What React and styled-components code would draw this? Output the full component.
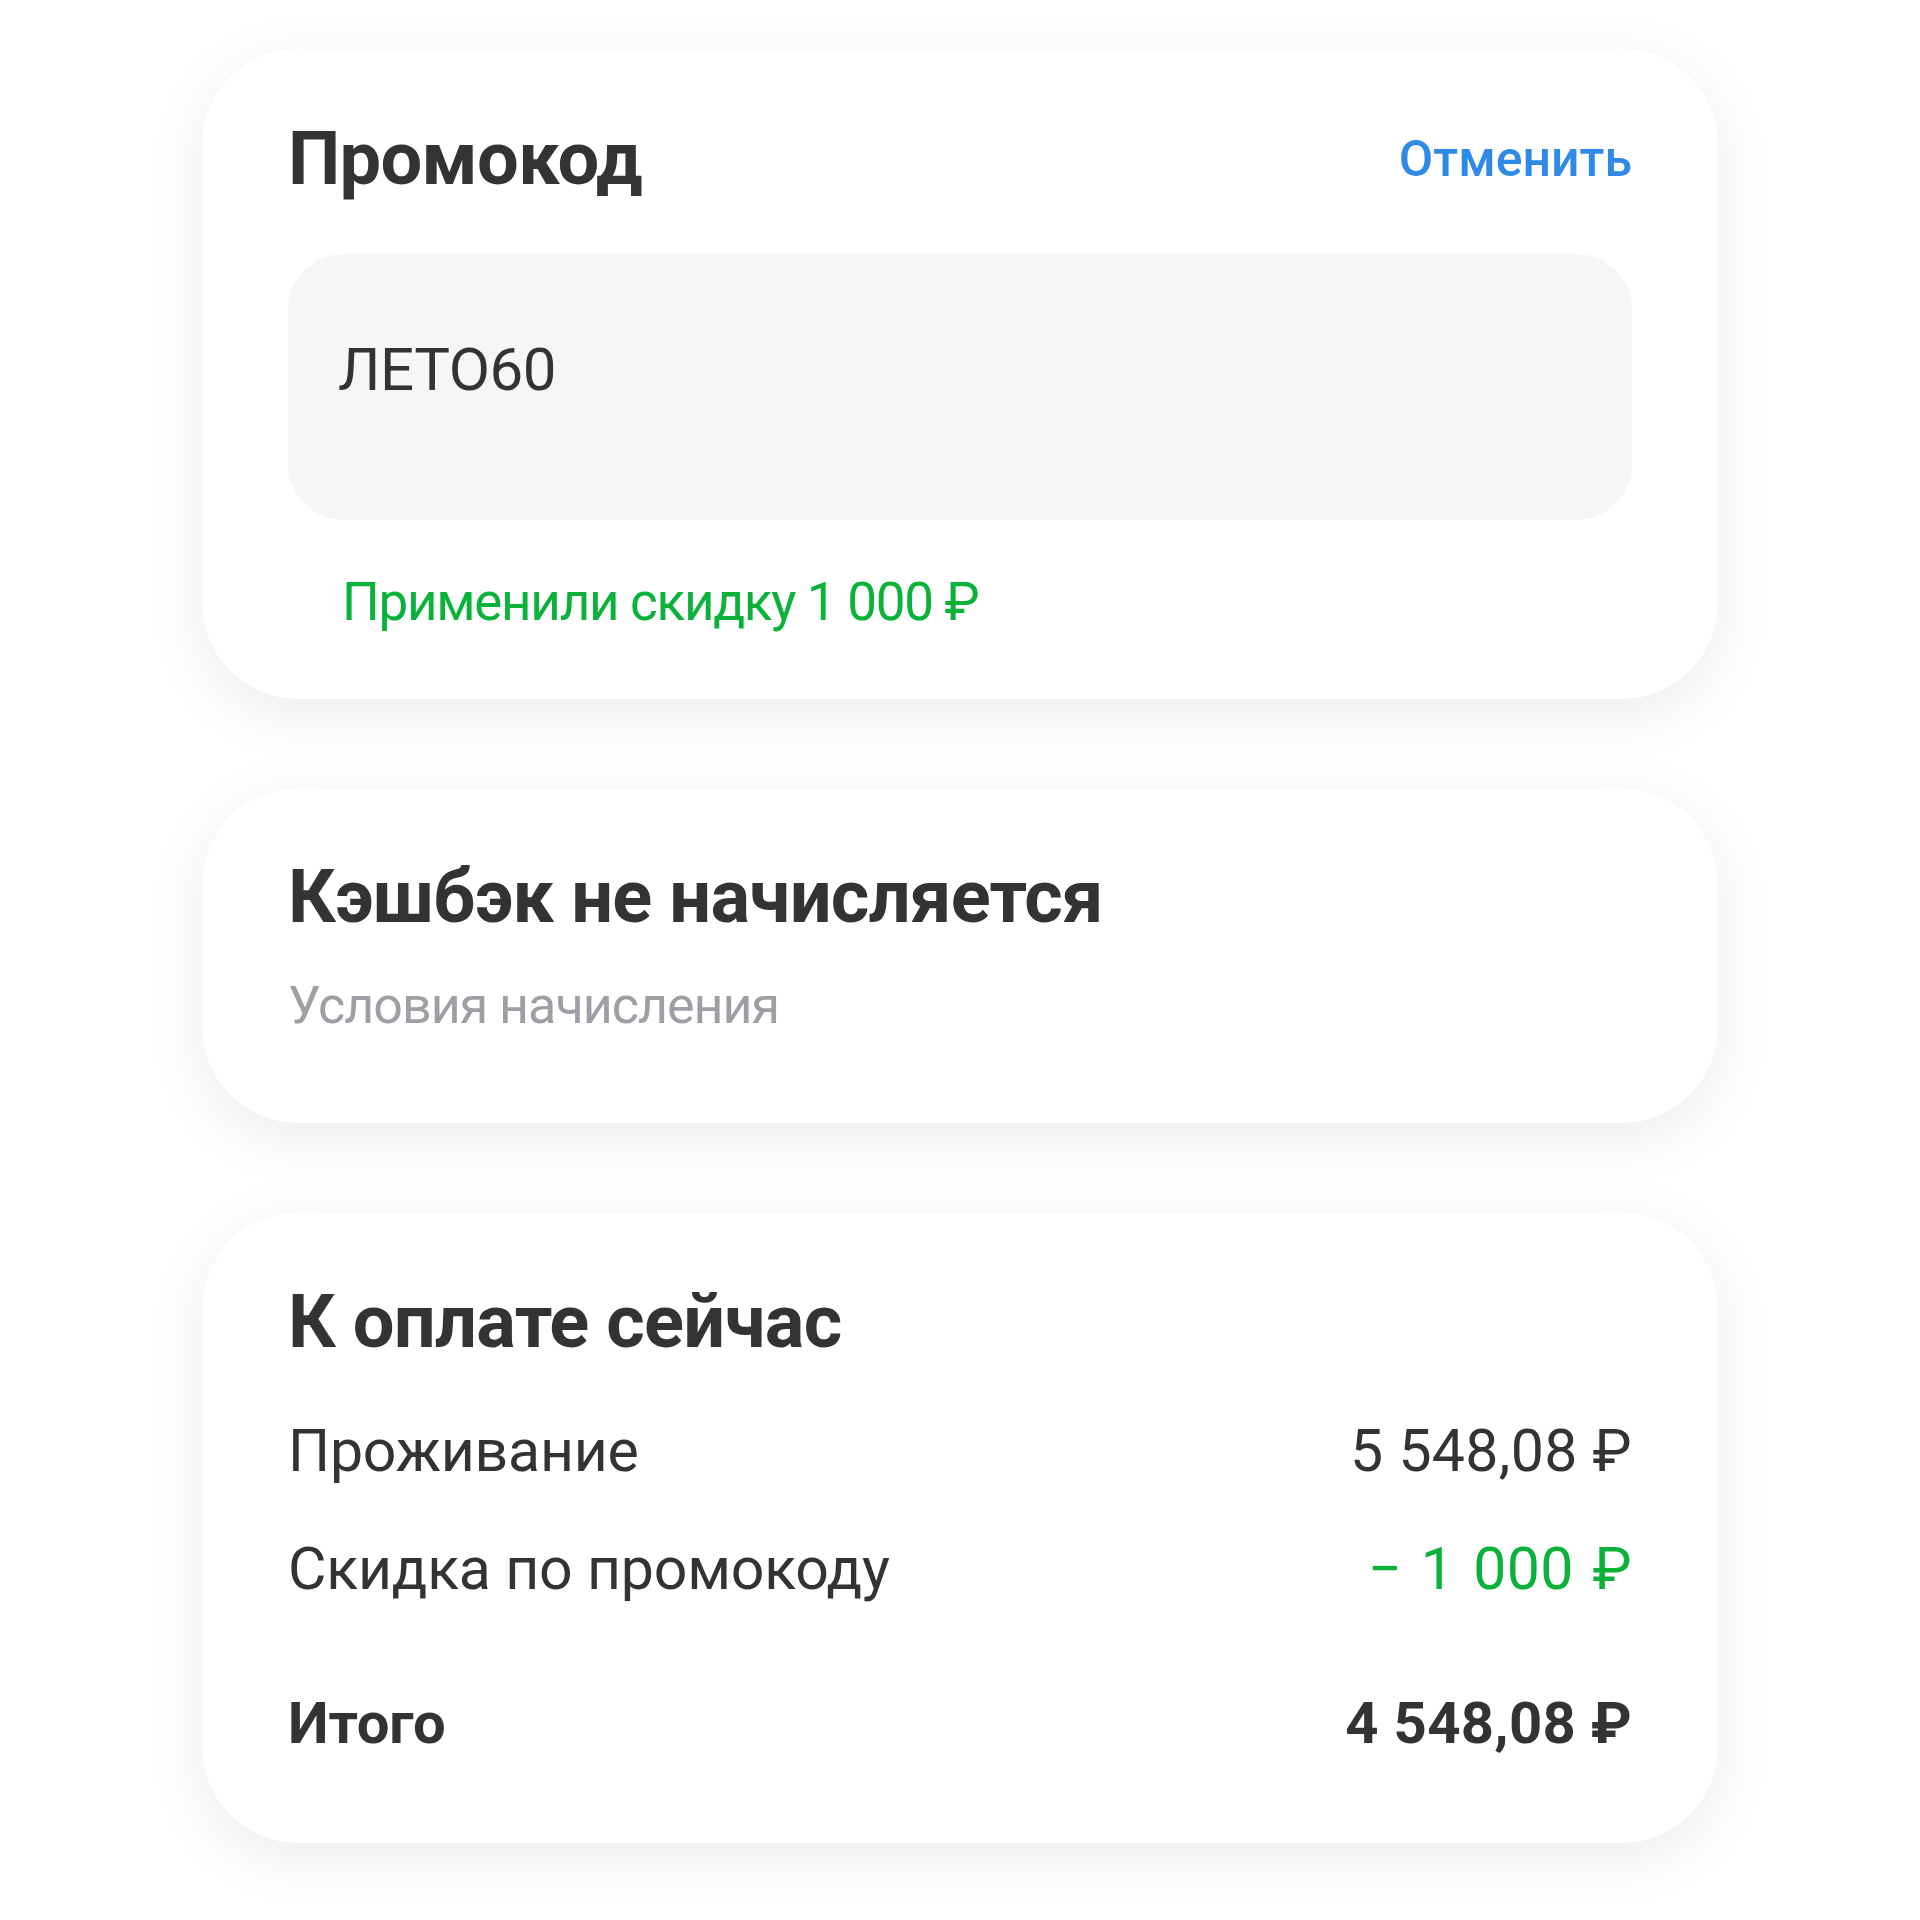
import styled, { createGlobalStyle } from 'styled-components';

const GlobalStyle = createGlobalStyle`
  body {
    margin: 0;
    background: #ffffff;
    font-family: Roboto, "Noto Sans", sans-serif;
    color: #333333;
  }
`;

const Page = styled.div`
  width: 1516px;
  margin: 0 auto;
  padding: 49px 0 80px;
  display: flex;
  flex-direction: column;
  gap: 90px;
`;

const Card = styled.section`
  background: #ffffff;
  border-radius: 96px;
  box-shadow: 0 14px 60px rgba(0, 0, 0, 0.08);
  padding: ${props => props.$padding};
  display: flex;
  flex-direction: column;
`;

const Header = styled.div`
  display: flex;
  justify-content: space-between;
  align-items: center;
`;

const Title = styled.h2`
  margin: 0;
  font-size: 74px;
  line-height: 1.2;
  font-weight: 700;
  letter-spacing: -0.7px;
  color: #333333;
`;

const LinkButton = styled.button`
  background: transparent;
  border: none;
  padding: 0;
  font-family: inherit;
  font-size: 50px;
  line-height: 1.2;
  font-weight: 500;
  color: #2f8ae6;
  cursor: pointer;
`;

const CodeField = styled.div`
  margin-top: 50px;
  height: 266px;
  box-sizing: border-box;
  padding: 80px 50px 0;
  background: #f5f7f7;
  border-radius: 56px;
  font-size: 60px;
  line-height: 1.2;
  letter-spacing: -0.5px;
  color: #333333;
`;

const Success = styled.div`
  margin-top: 51px;
  padding-left: 54px;
  font-size: 53px;
  line-height: 1.2;
  letter-spacing: -1.3px;
  color: #0bb23a;
`;

const Muted = styled.div`
  margin-top: 33px;
  font-size: 52px;
  line-height: 1.2;
  letter-spacing: -1px;
  color: #9ca0a5;
`;

const Row = styled.div`
  display: flex;
  justify-content: space-between;
  align-items: baseline;
  margin-top: ${props => props.$gap}px;
  font-size: ${props => (props.$total ? 58 : 59)}px;
  line-height: 1.2;
  letter-spacing: -0.2px;
  font-weight: ${props => (props.$total ? 700 : 400)};
  color: #333333;
`;

const Amount = styled.span`
  letter-spacing: 0.3px;
  word-spacing: ${props => (props.$green ? 4 : 0)}px;
  color: ${props => (props.$green ? '#0bb23a' : '#333333')};
`;

export default function App() {
  return (
    <>
      <GlobalStyle />
      <Page>
        <Card $padding="66px 86px 65px">
          <Header>
            <Title>Промокод</Title>
            <LinkButton>Отменить</LinkButton>
          </Header>
          <CodeField>ЛЕТО60</CodeField>
          <Success>Применили скидку 1 000 ₽</Success>
        </Card>

        <Card $padding="64px 86px 85px">
          <Title>Кэшбэк не начисляется</Title>
          <Muted>Условия начисления</Muted>
        </Card>

        <Card $padding="65px 86px 84px">
          <Title>К оплате сейчас</Title>
          <Row $gap={50}>
            <span>Проживание</span>
            <Amount>5 548,08 ₽</Amount>
          </Row>
          <Row $gap={47}>
            <span>Скидка по промокоду</span>
            <Amount $green>− 1 000 ₽</Amount>
          </Row>
          <Row $gap={84} $total>
            <span>Итого</span>
            <Amount>4 548,08 ₽</Amount>
          </Row>
        </Card>
      </Page>
    </>
  );
}
